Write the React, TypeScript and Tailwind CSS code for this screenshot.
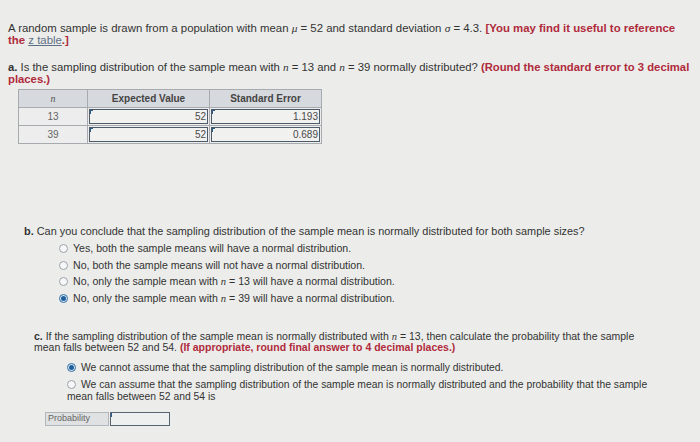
import React from 'react';

function Radio({ checked }: { checked?: boolean }) {
  return (
    <span
      className={`inline-flex h-[9px] w-[9px] shrink-0 items-center justify-center rounded-full border ${
        checked ? 'border-[#2f6fa8] bg-[#dfe8f0]' : 'border-[#9aa3ab] bg-[#f7f7f7]'
      }`}
    >
      {checked && <span className="h-[5px] w-[5px] rounded-full bg-[#1f5f9c]" />}
    </span>
  );
}

function Cell({ value }: { value: string }) {
  return (
    <td className="border border-[#a7abb0] p-[1px]">
      <div className="relative h-[15px] border border-[#4d5b69] bg-[#f1f1f0] pr-[1px] text-right leading-[13px] text-[#4a4a4a]">
        <span className="absolute left-0 top-0 h-[4px] w-[1px] bg-[#2d5b8a]" />
        <span className="absolute left-0 top-0 h-[1px] w-[3px] bg-[#2d5b8a]" />
        {value}
      </div>
    </td>
  );
}

const N = () => <i className="font-['Liberation_Serif',serif]">n</i>;

export default function App() {
  const rows = [
    { n: '13', ev: '52', se: '1.193' },
    { n: '39', ev: '52', se: '0.689' },
  ];

  return (
    <div className="h-[442px] w-[700px] overflow-hidden bg-[#ecedea] font-['Liberation_Sans',Arial,sans-serif] text-[#333333]">
      <div className="whitespace-nowrap pl-[8px] pt-[22px] text-[11.4px] leading-[12px]">
        A random sample is drawn from a population with mean <i className="font-['Liberation_Serif',serif]">μ</i> = 52 and standard deviation{' '}
        <i className="font-['Liberation_Serif',serif]">σ</i> = 4.3.{' '}
        <span className="font-bold text-[#b02a3c]">[You may find it useful to reference</span>
        <br />
        <span className="font-bold text-[#b02a3c]">
          the <span className="font-normal text-[#5d6f86] underline">z table</span>.]
        </span>
      </div>

      <div className="mt-[15px] whitespace-nowrap pl-[8px] text-[11.3px] leading-[12px]">
        <span className="font-bold">a.</span> Is the sampling distribution of the sample mean with <N /> = 13 and <N /> = 39 normally distributed?{' '}
        <span className="font-bold text-[#b02a3c]">(Round the standard error to 3 decimal</span>
        <br />
        <span className="font-bold text-[#b02a3c]">places.)</span>
      </div>

      <table className="ml-[18px] mt-[4px] w-[304px] border-collapse text-[10px]">
        <thead>
          <tr className="h-[18px] bg-[#d6d9dd]">
            <th className="w-[69px] border border-[#a7abb0] font-normal italic text-[#555]">
              <span className="font-['Liberation_Serif',serif]">n</span>
            </th>
            <th className="w-[122px] border border-[#a7abb0] font-bold text-[#444]">Expected Value</th>
            <th className="border border-[#a7abb0] font-bold text-[#444]">Standard Error</th>
          </tr>
        </thead>
        <tbody>
          {rows.map((r) => (
            <tr key={r.n} className="bg-[#ecedec]">
              <td className="border border-[#a7abb0] text-center text-[#666]">{r.n}</td>
              <Cell value={r.ev} />
              <Cell value={r.se} />
            </tr>
          ))}
        </tbody>
      </table>

      <div className="whitespace-nowrap pl-[24px] pt-[81px] text-[10.9px] leading-[13px]">
        <span className="font-bold">b.</span> Can you conclude that the sampling distribution of the sample mean is normally distributed for both sample sizes?
      </div>

      <div className="flex flex-col gap-[3.5px] whitespace-nowrap pl-[59px] pt-[4px] text-[10.6px] leading-[13px]">
        <div className="flex items-center gap-[5px]">
          <Radio /> Yes, both the sample means will have a normal distribution.
        </div>
        <div className="flex items-center gap-[5px]">
          <Radio /> No, both the sample means will not have a normal distribution.
        </div>
        <div className="flex items-center gap-[5px]">
          <Radio /> <span>No, only the sample mean with <N /> = 13 will have a normal distribution.</span>
        </div>
        <div className="flex items-center gap-[5px]">
          <Radio checked /> <span>No, only the sample mean with <N /> = 39 will have a normal distribution.</span>
        </div>
      </div>

      <div className="whitespace-nowrap pl-[34px] pt-[26px] text-[10.5px] leading-[11px]">
        <span className="font-bold">c.</span> If the sampling distribution of the sample mean is normally distributed with <N /> = 13, then calculate the probability that the sample
        <br />
        mean falls between 52 and 54. <span className="font-bold text-[#b02a3c]">(If appropriate, round final answer to 4 decimal places.)</span>
      </div>

      <div className="whitespace-nowrap pl-[67px] pt-[9px] text-[10.35px] leading-[11px]">
        <div className="flex items-center gap-[5px]">
          <Radio checked /> We cannot assume that the sampling distribution of the sample mean is normally distributed.
        </div>
        <div className="mt-[6px]">
          <span className="mr-[5px] inline-block align-[-1px]">
            <Radio />
          </span>
          We can assume that the sampling distribution of the sample mean is normally distributed and the probability that the sample
          <br />
          mean falls between 52 and 54 is
        </div>
      </div>

      <div className="ml-[45px] mt-[10px] flex h-[14px] text-[9px]">
        <div className="flex w-[64px] items-center border border-[#b3b7bb] bg-[#dfe1e2] pl-[2px] text-[#666]">Probability</div>
        <div className="relative ml-[1px] w-[60px] border border-[#566474] bg-[#eeefef]">
          <span className="absolute left-0 top-0 h-[4px] w-[1px] bg-[#2d5b8a]" />
        </div>
      </div>
    </div>
  );
}
